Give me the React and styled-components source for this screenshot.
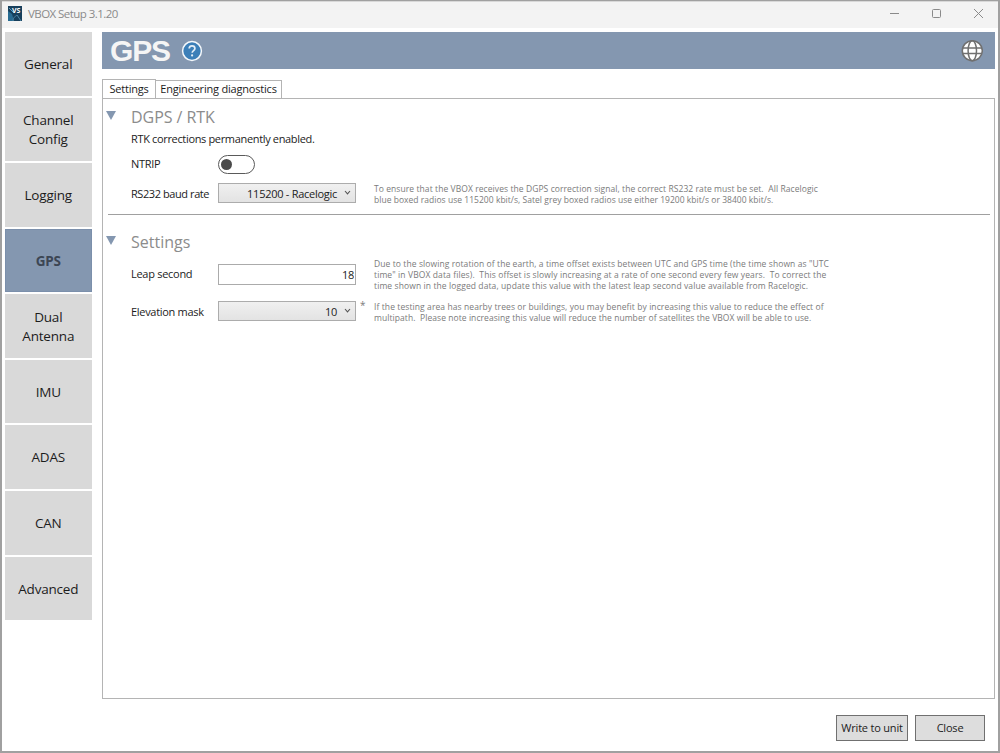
import React, { useState } from "react";
import styled, { createGlobalStyle } from "styled-components";

const GlobalStyle = createGlobalStyle`
  * {
    box-sizing: border-box;
  }

  body {
    margin: 0;
    font-family: "Open Sans", "Noto Sans", sans-serif;
    font-size: 11px;
    color: #1c1c1c;
    background: #ffffff;
  }

  button {
    font: inherit;
    color: inherit;
    padding: 0;
    margin: 0;
  }
`;

const Window = styled.div`
  display: flex;
  flex-direction: column;
  width: 1000px;
  height: 753px;
  border: 2px solid #a0a0a0;
  border-top-width: 1px;
  background: #ffffff;
  overflow: hidden;
`;

const TitleBar = styled.header`
  display: flex;
  align-items: center;
  height: 27px;
  flex: none;
  padding: 0 14px 3px 6px;
  background: #f3f3f3;
  border-top: 1px solid #d8d8d8;
`;

const TitleText = styled.span`
  flex: 1;
  margin-left: 6px;
  font-size: 11.5px;
  letter-spacing: -0.55px;
  color: #8a8a8a;
`;

const WindowButtons = styled.div`
  display: flex;
  gap: 31px;
`;

const Body = styled.div`
  display: flex;
  flex: 1;
  padding: 4px 3px 0 2.5px;
`;

const Nav = styled.nav`
  display: flex;
  flex-direction: column;
  gap: 2px;
  width: 87.5px;
  height: 588px;
  flex: none;
`;

const NavItem = styled.button`
  flex: 1 1 0;
  min-height: 0;
  padding-top: 1px;
  border: 0;
  box-shadow: ${(p) => (p.$active ? "inset 0 0 0 1px #7b8fab" : "none")};
  background: ${(p) => (p.$active ? "#8497b0" : "#d9d9d9")};
  color: ${(p) => (p.$active ? "#3c4654" : "#1c1c1c")};
  font-size: 13.5px;
  font-weight: ${(p) => (p.$active ? 700 : 400)};
  letter-spacing: ${(p) => (p.$active ? "-0.3px" : "-0.2px")};
  line-height: 18.5px;
  white-space: pre-line;
`;

const Main = styled.main`
  display: flex;
  flex-direction: column;
  flex: 1;
  margin-left: 10px;
`;

const PageHeader = styled.div`
  display: flex;
  align-items: center;
  height: 37px;
  padding: 0 12px 0 8px;
  background: #8497b0;
`;

const PageTitle = styled.h1`
  margin: 0 11px 0 0;
  font-family: "Liberation Sans", Arial, sans-serif;
  font-size: 30px;
  line-height: 36px;
  letter-spacing: -1.2px;
  color: #f5f5f5;
`;

const Spacer = styled.div`
  flex: 1;
`;

const Tabs = styled.div`
  display: flex;
  align-items: flex-end;
  height: 29px;
`;

const Tab = styled.button`
  height: ${(p) => (p.$active ? "20px" : "18px")};
  width: ${(p) => p.$width};
  margin-bottom: ${(p) => (p.$active ? "-1px" : "0")};
  margin-left: ${(p) => (p.$active ? "0" : "-1px")};
  padding-bottom: 2px;
  border: 1px solid #b4b4b4;
  border-bottom: 0;
  background: #ffffff;
  letter-spacing: ${(p) => p.$spacing};
  white-space: nowrap;
`;

const Panel = styled.section`
  height: 601px;
  padding: 0 4px 0 5px;
  border: 1px solid #b4b4b4;
`;

const Group = styled.div`
  display: grid;
  grid-template-columns: 23px 87px 138px 1fr;
  grid-template-rows: ${(p) => p.$rows};
  align-items: center;
  height: ${(p) => p.$height};
  padding-top: ${(p) => p.$top};
  border-bottom: ${(p) => (p.$divider ? "1px solid #a0a0a0" : "0")};
`;

const Arrow = styled.span`
  width: 0;
  margin: -3px 0 0 -2px;
  border: 5.5px solid transparent;
  border-top: 9px solid #8497b0;
  border-bottom: 0;
`;

const GroupTitle = styled.h2`
  grid-column: 2 / -1;
  margin: 0;
  font-size: 16px;
  font-weight: 400;
  line-height: 22px;
  letter-spacing: ${(p) => p.$spacing};
  color: #8c8c8c;
`;

const Label = styled.span`
  grid-column: ${(p) => (p.$wide ? "2 / -1" : "2")};
  letter-spacing: ${(p) => p.$spacing};
  line-height: 16px;
  white-space: nowrap;
`;

const Toggle = styled.button`
  display: flex;
  align-items: center;
  width: 37px;
  height: 19px;
  padding: 0 2px;
  border: 1px solid #5a5a5a;
  border-radius: 10px;
  background: #ffffff;
  justify-content: ${(p) => (p.$on ? "flex-end" : "flex-start")};
`;

const Knob = styled.span`
  width: 11px;
  height: 11px;
  border-radius: 50%;
  background: #4a4a4a;
`;

const Select = styled.button`
  display: flex;
  align-items: center;
  justify-content: flex-end;
  gap: 7px;
  width: 138px;
  height: 20px;
  margin-bottom: 1px;
  padding: 0 4px 0 0;
  border: 1px solid #acacac;
  background: linear-gradient(#f0f0f0, #e3e3e3);
  letter-spacing: ${(p) => p.$spacing};
`;

const NumberInput = styled.input`
  width: 138px;
  height: 21px;
  padding: 0 1px;
  border: 1px solid #ababab;
  font: inherit;
  color: inherit;
  letter-spacing: -0.3px;
  text-align: right;
`;

const Hint = styled.div`
  position: relative;
  padding-left: 18px;
  font-size: 8.5px;
  line-height: 11px;
  color: #7b7b7b;
`;

const HintLine = styled.div`
  white-space: pre;
  letter-spacing: ${(p) => p.$spacing};
`;

const Changed = styled.span`
  position: absolute;
  left: 4px;
  top: -1px;
  font-size: 10px;
`;

const Footer = styled.footer`
  display: flex;
  justify-content: flex-end;
  gap: 7px;
  padding: 16px 10px 0 0;
`;

const FooterButton = styled.button`
  width: ${(p) => p.$width};
  height: 26px;
  padding-bottom: 1px;
  border: 1px solid #707070;
  background: #dddddd;
  letter-spacing: -0.2px;
  white-space: nowrap;
`;

const AppIcon = () => (
  <svg width="14" height="15" viewBox="0 0 14 15">
    <rect width="14" height="15" fill="#173f5c" />
    <path d="M0 5l4 3 2 7H0z" fill="#286b91" />
    <path d="M5 15c0-4 2-4 4-6l4 6" fill="none" stroke="#4f87a5" />
    <path d="M1 2l5 5" stroke="#5d9cbb" />
    <text x="4" y="6.5" fontSize="7" fontWeight="700" fill="#fff">VS</text>
  </svg>
);

const HelpIcon = () => (
  <svg width="22" height="22" viewBox="0 0 22 22">
    <circle cx="11" cy="11" r="9.4" fill="#3c7fb8" stroke="#f5f8fb" strokeWidth="1.5" />
    <path d="M8.2 8.6C8.2 6.7 9.3 5.8 11 5.8s2.9 1 2.9 2.6c0 2.1-2.7 2.3-2.7 4.4" fill="none" stroke="#e4eef6" strokeWidth="1.7" />
    <circle cx="11.1" cy="15.4" r="1.1" fill="#e4eef6" />
  </svg>
);

const GlobeIcon = () => (
  <svg width="22" height="22" viewBox="0 0 22 22">
    <circle cx="11.3" cy="10.7" r="10" fill="#fff" />
    <g fill="none" stroke="#707070" strokeWidth="1.5">
      <circle cx="11.3" cy="10.7" r="10" />
      <ellipse cx="11.3" cy="10.7" rx="4.2" ry="10" />
      <path d="M2 8h18.6M2 13.4h18.6" />
    </g>
  </svg>
);

const Chevron = () => (
  <svg width="7" height="6" viewBox="0 0 7 6">
    <path d="M1 1l2.5 2.8L6 1" fill="none" stroke="#555" strokeWidth="1.1" />
  </svg>
);

const navItems = [
  "General",
  "Channel\nConfig",
  "Logging",
  "GPS",
  "Dual\nAntenna",
  "IMU",
  "ADAS",
  "CAN",
  "Advanced",
];

function App() {
  const [page, setPage] = useState("GPS");
  const [ntrip, setNtrip] = useState(false);

  return (
    <>
      <GlobalStyle />
      <Window>
        <TitleBar>
          <AppIcon />
          <TitleText>VBOX Setup 3.1.20</TitleText>
          <WindowButtons>
            <svg width="11" height="11"><path d="M1 5.5h9" stroke="#8a8a8a" /></svg>
            <svg width="11" height="11"><rect x="1.5" y="1.5" width="8" height="8" rx="1" fill="none" stroke="#8a8a8a" /></svg>
            <svg width="11" height="11"><path d="M1 1l9 9M10 1l-9 9" stroke="#8a8a8a" /></svg>
          </WindowButtons>
        </TitleBar>
        <Body>
          <Nav>
            {navItems.map((item) => (
              <NavItem key={item} $active={item === page} onClick={() => setPage(item)}>
                {item}
              </NavItem>
            ))}
          </Nav>
          <Main>
            <PageHeader>
              <PageTitle>GPS</PageTitle>
              <HelpIcon />
              <Spacer />
              <GlobeIcon />
            </PageHeader>
            <Tabs>
              <Tab $active $width="54px" $spacing="-0.2px">Settings</Tab>
              <Tab $width="127px" $spacing="-0.2px">Engineering diagnostics</Tab>
            </Tabs>
            <Panel>
              <Group $divider $height="116px" $top="7px" $rows="22px 22px 28px 31px">
                <Arrow />
                <GroupTitle $spacing="-0.05px">DGPS / RTK</GroupTitle>
                <Label $wide $spacing="-0.34px">RTK corrections permanently enabled.</Label>
                <Label $spacing="-0.3px">NTRIP</Label>
                <Toggle $on={ntrip} onClick={() => setNtrip(!ntrip)}>
                  <Knob />
                </Toggle>
                <Label $spacing="-0.42px">RS232 baud rate</Label>
                <Select $spacing="-0.27px">
                  115200 - Racelogic
                  <Chevron />
                </Select>
                <Hint>
                  <HintLine $spacing="0.075px">To ensure that the VBOX receives the DGPS correction signal, the correct RS232 rate must be set.  All Racelogic</HintLine>
                  <HintLine $spacing="0.03px">blue boxed radios use 115200 kbit/s, Satel grey boxed radios use either 19200 kbit/s or 38400 kbit/s.</HintLine>
                </Hint>
              </Group>
              <Group $height="120px" $top="16px" $rows="22px 42px 33px">
                <Arrow />
                <GroupTitle $spacing="0">Settings</GroupTitle>
                <Label $spacing="-0.28px">Leap second</Label>
                <NumberInput defaultValue="18" />
                <Hint>
                  <HintLine $spacing="0.09px">Due to the slowing rotation of the earth, a time offset exists between UTC and GPS time (the time shown as "UTC</HintLine>
                  <HintLine $spacing="0.11px">time" in VBOX data files).  This offset is slowly increasing at a rate of one second every few years.  To correct the</HintLine>
                  <HintLine $spacing="0.1px">time shown in the logged data, update this value with the latest leap second value available from Racelogic.</HintLine>
                </Hint>
                <Label $spacing="-0.3px">Elevation mask</Label>
                <Select $spacing="-0.3px">
                  10
                  <Chevron />
                </Select>
                <Hint>
                  <Changed>*</Changed>
                  <HintLine $spacing="0.09px">If the testing area has nearby trees or buildings, you may benefit by increasing this value to reduce the effect of</HintLine>
                  <HintLine $spacing="0.065px">multipath.  Please note increasing this value will reduce the number of satellites the VBOX will be able to use.</HintLine>
                </Hint>
              </Group>
            </Panel>
            <Footer>
              <FooterButton $width="72px">Write to unit</FooterButton>
              <FooterButton $width="70px">Close</FooterButton>
            </Footer>
          </Main>
        </Body>
      </Window>
    </>
  );
}

export default App;
